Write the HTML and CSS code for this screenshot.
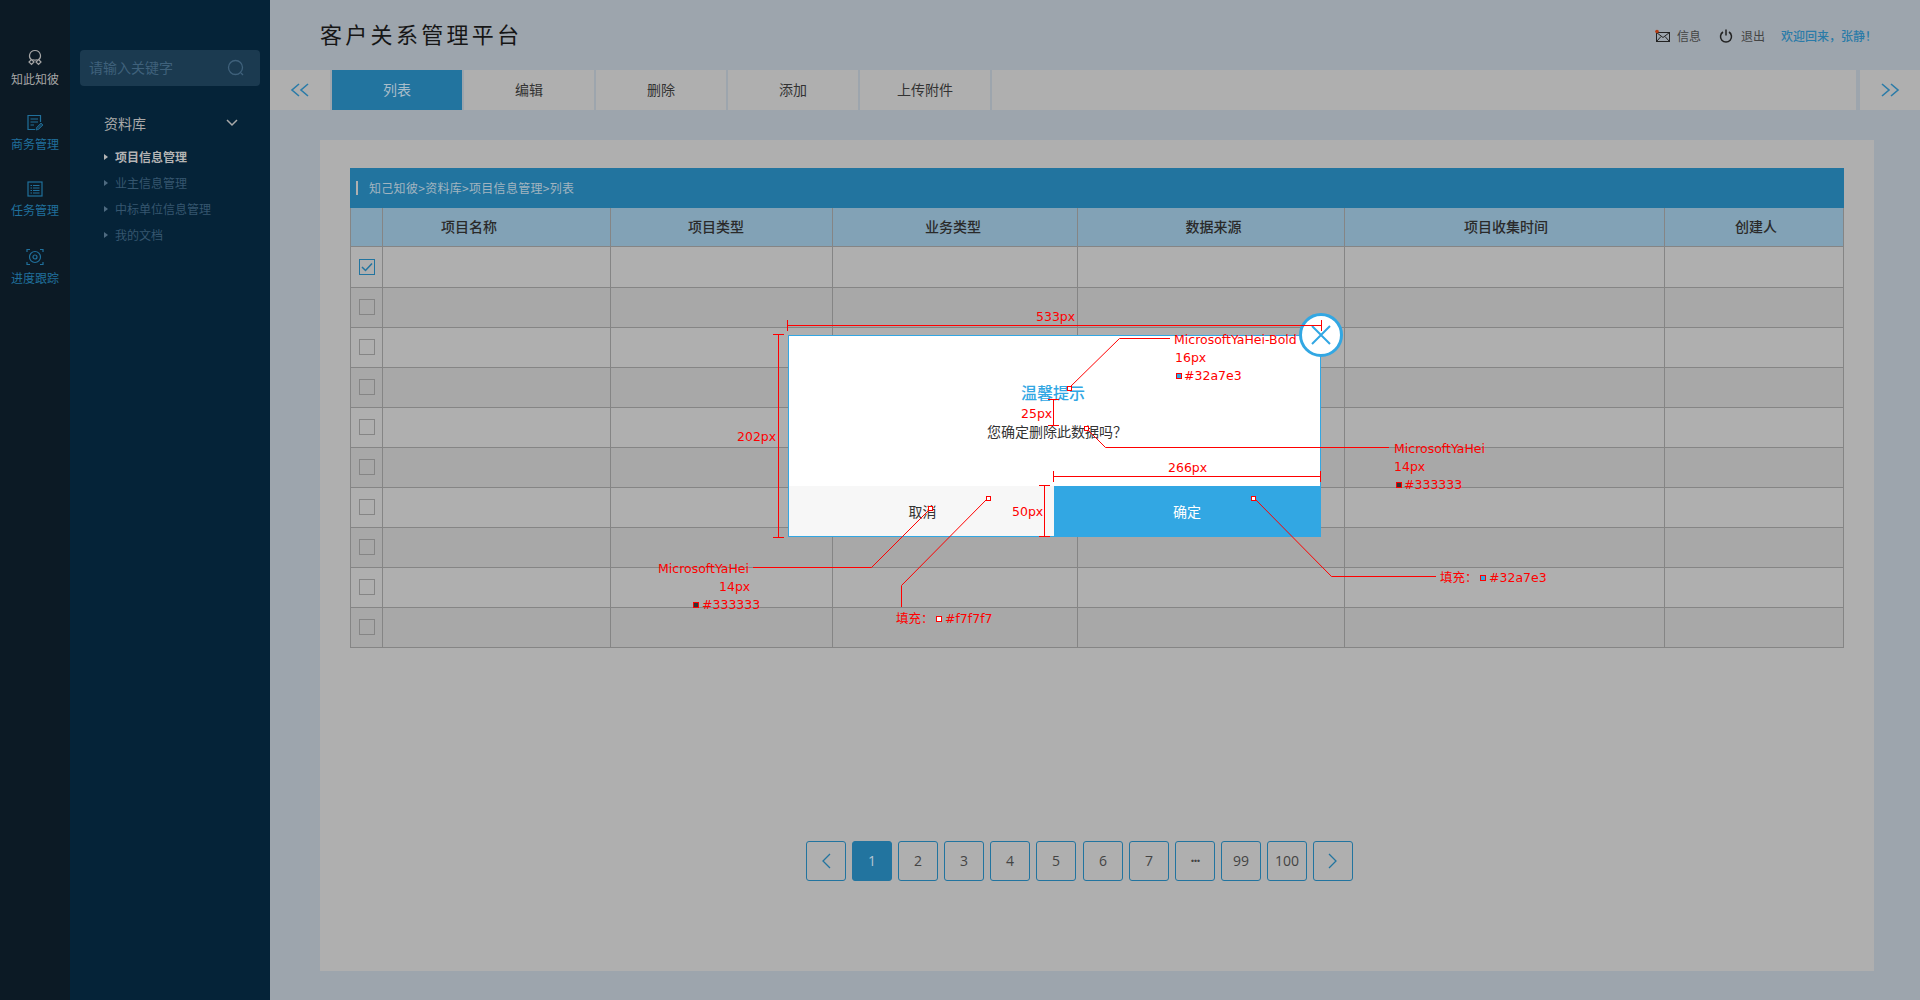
FILE: index.html
```html
<!DOCTYPE html>
<html lang="zh">
<head>
  <meta charset="UTF-8">
  <title>客户关系管理平台</title>
  <link rel="stylesheet" href="styles.css">
</head>
<body>
<nav class="rail">
  <a class="rail-item on">
    <svg width="18" height="18" viewBox="0 0 18 18" fill="none" stroke="currentColor" stroke-width="1.2"><path d="M5.2 10.5C3.6 9.3 3.2 7.8 3.6 5.8 4.2 3.2 6.2 1.5 9 1.5s4.800 1.700 5.400 4.300c.4 2 0 3.500-1.600 4.700"/><path d="M5.500 10.500l2.500 2.500-2.500 2.500L3 13zM12.500 10.500l2.500 2.500-2.500 2.500L10 13z"/><path d="M6.500 10.500c1.500.8 3.500.8 5 0"/></svg>
    <span>知此知彼</span>
  </a>
  <a class="rail-item">
    <svg width="18" height="18" viewBox="0 0 18 18" fill="none" stroke="currentColor" stroke-width="1.200"><path d="M14.500 8V1.500h-12.500v14h7"/><path d="M4.500 5h7.500M4.500 8h7.500M4.500 11h3.500"/><path class="pencil" d="M10 16l.7-2.700 4.300-4.300 2 2-4.300 4.300z"/></svg>
    <span>商务管理</span>
  </a>
  <a class="rail-item">
    <svg width="18" height="18" viewBox="0 0 18 18" fill="none" stroke="currentColor" stroke-width="1.200"><rect x="2" y="2" width="14" height="14"/><path d="M4.500 5.500h1.500M7 5.500h6.500M4.500 8h1.500M7 8h6.500M4.500 10.500h1.500M7 10.500h6.500M4.500 13h1.500M7 13h6.500"/></svg>
    <span>任务管理</span>
  </a>
  <a class="rail-item">
    <svg width="18" height="18" viewBox="0 0 18 18" fill="none" stroke="currentColor" stroke-width="1.200"><path d="M1 4V1.500h3M14 1.500h3V4M17 14v2.500h-3M4 16.500H1V14"/><circle cx="9" cy="9" r="5.500"/><circle cx="9" cy="9" r="2"/></svg>
    <span>进度跟踪</span>
  </a>
</nav>

<aside class="side">
  <div class="search">
    <span>请输入关键字</span>
    <svg width="18" height="18" viewBox="0 0 18 18" fill="none" stroke="currentColor" stroke-width="1.300"><circle cx="8.500" cy="8.500" r="7"/><path d="M14 14l2 2"/></svg>
  </div>
  <div class="side-head">
    <span>资料库</span>
    <svg width="12" height="8" viewBox="0 0 12 8" fill="none" stroke="currentColor" stroke-width="1.500"><path d="M1 1l5 5 5-5"/></svg>
  </div>
  <ul class="side-list">
    <li class="on">项目信息管理</li>
    <li>业主信息管理</li>
    <li>中标单位信息管理</li>
    <li>我的文档</li>
  </ul>
</aside>

<main class="main">
  <header class="top">
    <div class="logo">客户关系管理平台</div>
    <div class="top-links">
      <a class="top-link">
        <svg width="16" height="14" viewBox="0 0 16 14" fill="none" stroke="#222" stroke-width="1"><rect x="1.500" y="3.500" width="13" height="9"/><path d="M1.500 3.500l6.500 5 6.500-5M1.500 12.500l4.500-5M14.500 12.500l-4.500-5"/><circle cx="2" cy="2.500" r="1.800" fill="#b33a12" stroke="none"/></svg>
        信息
      </a>
      <a class="top-link power">
        <svg width="14" height="14" viewBox="0 0 14 14" fill="none" stroke="#222" stroke-width="1.500"><path d="M4 3a5.500 5.500 0 1 0 6 0"/><path d="M7 .5v6"/></svg>
        退出
      </a>
      <span class="welcome">欢迎回来，张静！</span>
    </div>
  </header>

  <div class="tabs">
    <button class="tab-arrow">
      <svg width="20" height="14" viewBox="0 0 20 14" fill="none" stroke="currentColor" stroke-width="1.600"><path d="M9 1L2 7l7 6M18 1l-7 6 7 6"/></svg>
    </button>
    <a class="tab active">列表</a>
    <a class="tab">编辑</a>
    <a class="tab">删除</a>
    <a class="tab">添加</a>
    <a class="tab">上传附件</a>
    <div class="tab-fill"></div>
    <button class="tab-arrow right">
      <svg width="20" height="14" viewBox="0 0 20 14" fill="none" stroke="currentColor" stroke-width="1.600"><path d="M2 1l7 6-7 6M11 1l7 6-7 6"/></svg>
    </button>
  </div>

  <section class="panel">
    <div class="crumb"><i></i>知己知彼&gt;资料库&gt;项目信息管理&gt;列表</div>
    <table class="grid">
      <colgroup>
        <col class="c0"><col class="c1"><col class="c2"><col class="c3"><col class="c4"><col class="c5"><col class="c6">
      </colgroup>
      <thead>
      <tr>
        <th></th>
        <th class="name">项目名称</th>
        <th class="type">项目类型</th>
        <th class="biz">业务类型</th>
        <th class="src">数据来源</th>
        <th class="time">项目收集时间</th>
        <th class="owner">创建人</th>
      </tr>
      </thead>
      <tbody>
      <tr><td><span class="check on"><svg width="12" height="10" viewBox="0 0 12 10" fill="none" stroke="currentColor" stroke-width="1.500"><path d="M1 5l3.500 3.500L11 1.500"/></svg></span></td><td></td><td></td><td></td><td></td><td></td><td></td></tr>
      <tr><td><span class="check"></span></td><td></td><td></td><td></td><td></td><td></td><td></td></tr>
      <tr><td><span class="check"></span></td><td></td><td></td><td></td><td></td><td></td><td></td></tr>
      <tr><td><span class="check"></span></td><td></td><td></td><td></td><td></td><td></td><td></td></tr>
      <tr><td><span class="check"></span></td><td></td><td></td><td></td><td></td><td></td><td></td></tr>
      <tr><td><span class="check"></span></td><td></td><td></td><td></td><td></td><td></td><td></td></tr>
      <tr><td><span class="check"></span></td><td></td><td></td><td></td><td></td><td></td><td></td></tr>
      <tr><td><span class="check"></span></td><td></td><td></td><td></td><td></td><td></td><td></td></tr>
      <tr><td><span class="check"></span></td><td></td><td></td><td></td><td></td><td></td><td></td></tr>
      <tr><td><span class="check"></span></td><td></td><td></td><td></td><td></td><td></td><td></td></tr>
      </tbody>
    </table>
    <div class="pager">
      <a><svg width="10" height="16" viewBox="0 0 10 16" fill="none" stroke="currentColor" stroke-width="1.300"><path d="M9 1L2 8l7 7"/></svg></a>
      <a class="active">1</a>
      <a>2</a>
      <a>3</a>
      <a>4</a>
      <a>5</a>
      <a>6</a>
      <a>7</a>
      <a class="dots">···</a>
      <a>99</a>
      <a>100</a>
      <a><svg width="10" height="16" viewBox="0 0 10 16" fill="none" stroke="currentColor" stroke-width="1.300"><path d="M1 1l7 7-7 7"/></svg></a>
    </div>
  </section>
</main>

<div class="dialog">
  <div class="dialog-body">
    <h2>温馨提示</h2>
    <p>您确定删除此数据吗？</p>
  </div>
  <div class="dialog-foot">
    <button class="cancel">取消</button>
    <button class="ok">确定</button>
  </div>
  <div class="dialog-close">
    <svg width="20" height="20" viewBox="0 0 20 20" fill="none" stroke="currentColor" stroke-width="2"><path d="M1 1l18 18M19 1L1 19"/></svg>
  </div>
</div>

<!-- redline notes from the design file -->
<svg class="notes" width="1920" height="1000" viewBox="0 0 1920 1000">
  <g fill="none" stroke="#f00">
    <path d="M787.500 320v11M787.500 325.500h534.500M1321.500 320v11"/>
    <path d="M773 334.500h11M778.500 334.500v203M773 537.500h11"/>
    <path d="M1048 399.500h11M1053.500 399.500v26.500M1048 425.500h11"/>
    <path d="M1039 485.500h11M1044.500 485.500v51M1039 536.500h11"/>
    <path d="M1053.500 471v11M1053.500 476.500h267.500M1320.500 471v11"/>
    <path d="M1069 388L1119.500 338.500H1170"/>
    <path d="M1086 428L1105.500 447.500H1389"/>
    <path d="M930 509L871.500 567.500H753"/>
    <path d="M988 498L901.500 585.500V607"/>
    <path d="M1254 498L1331.500 576.500H1436"/>
  </g>
  <g fill="#fff" stroke="#f00">
    <rect x="1067.500" y="386.500" width="4" height="4"/>
    <rect x="1084.500" y="426.500" width="4" height="4"/>
    <rect x="928.500" y="506.500" width="4" height="4"/>
    <rect x="986.500" y="496.500" width="4" height="4"/>
    <rect x="1251.500" y="496.500" width="4" height="4"/>
    <rect x="936.500" y="616.500" width="5" height="5"/>
    <rect x="1176.500" y="373.500" width="5" height="5" fill="#32a7e3"/>
    <rect x="1396.500" y="482.500" width="5" height="5" fill="#333"/>
    <rect x="693.500" y="602.500" width="5" height="5" fill="#333"/>
    <rect x="1480.500" y="575.500" width="5" height="5" fill="#32a7e3"/>
  </g>
  <g class="note-text">
    <text x="1036" y="321">533px</text>
    <text x="737" y="441">202px</text>
    <text x="1021" y="418">25px</text>
    <text x="1012" y="516">50px</text>
    <text x="1168" y="472">266px</text>
    <text x="1174" y="344">MicrosoftYaHei-Bold</text>
    <text x="1175" y="362">16px</text>
    <text x="1184" y="380">#32a7e3</text>
    <text x="1394" y="453">MicrosoftYaHei</text>
    <text x="1394" y="471">14px</text>
    <text x="1404" y="489">#333333</text>
    <text x="658" y="573">MicrosoftYaHei</text>
    <text x="719" y="591">14px</text>
    <text x="702" y="609">#333333</text>
    <text x="896" y="623">填充：</text>
    <text x="945" y="623">#f7f7f7</text>
    <text x="1440" y="582">填充：</text>
    <text x="1489" y="582">#32a7e3</text>
  </g>
</svg>
</body>
</html>
```

FILE: styles.css
```css
* {
  box-sizing: border-box;
}
body {
  margin: 0;
  height: 100vh;
  display: flex;
  overflow: hidden;
  background-color: #9da5ad;
  font-family: "Noto Sans CJK SC", sans-serif;
  font-size: 12px;
  color: #333;
}
button {
  font-family: inherit;
  border: 0;
  padding: 0;
}

/* Left rail */
.rail {
  width: 70px;
  flex: none;
  padding-top: 49px;
  background-color: #0c1a25;
  color: #20709c;
}
.rail-item {
  height: 66px;
  display: flex;
  flex-direction: column;
  align-items: center;
  gap: 3px;
}
.rail-item:first-child {
  height: 65px;
}
.rail-item:nth-child(3) {
  height: 68px;
}
.rail-item.on {
  color: #a6a6a6;
}
.rail-item span {
  line-height: 18px;
}
.pencil {
  fill: currentColor;
  fill-opacity: .5;
  stroke-width: .8;
}

/* Side menu */
.side {
  width: 200px;
  flex: none;
  padding: 50px 10px 0;
  background-color: #052338;
}
.search {
  height: 36px;
  padding: 0 15px 2px 9px;
  display: flex;
  align-items: center;
  justify-content: space-between;
  border-radius: 4px;
  background-color: #1b3a50;
  color: #3f617b;
  font-size: 14px;
}
.search svg {
  margin-top: 2px;
}
.side-head {
  margin-top: 25px;
  padding: 0 22px 0 24px;
  height: 24px;
  display: flex;
  align-items: center;
  justify-content: space-between;
  color: #a9a9a9;
  font-size: 14px;
}
.side-list {
  list-style: none;
  margin: 9px 0 0;
  padding: 0 0 0 24px;
  color: #35566f;
}
.side-list li {
  height: 26px;
  line-height: 26px;
  padding-left: 11px;
  position: relative;
}
.side-list li::before {
  content: "";
  position: absolute;
  left: 0;
  top: 10px;
  border-left: 4px solid #4e6a80;
  border-top: 3px solid transparent;
  border-bottom: 3px solid transparent;
}
.side-list li.on {
  color: #b4b4b4;
  font-weight: 700;
}
.side-list li.on::before {
  border-left-color: #b4b4b4;
}

/* Header */
.main {
  flex: 1;
  min-width: 0;
  display: flex;
  flex-direction: column;
}
.top {
  height: 70px;
  flex: none;
  padding: 0 43px 0 50px;
  display: flex;
  align-items: center;
  justify-content: space-between;
}
.logo {
  font-size: 22px;
  letter-spacing: 3.3px;
  color: #161616;
  margin-bottom: 5px;
}
.top-links {
  display: flex;
  align-items: center;
  gap: 16px;
  padding-top: 1px;
}
.top-link {
  display: flex;
  align-items: center;
  gap: 6px;
  color: #444;
}
.top-link.power {
  gap: 8px;
  margin-left: 2px;
}
.welcome {
  color: #2a7ba8;
  font-weight: 500;
}

/* Tabs */
.tabs {
  height: 40px;
  flex: none;
  display: flex;
  gap: 2px;
}
.tab, .tab-arrow, .tab-fill {
  background-color: #afafaf;
}
.tab-arrow {
  width: 60px;
  flex: none;
  display: flex;
  align-items: center;
  justify-content: center;
  color: #2a7ba8;
}
.tab-arrow.right {
  margin-left: 2px;
}
.tab {
  width: 130px;
  flex: none;
  line-height: 38px;
  text-align: center;
  font-size: 14px;
}
.tab.active {
  background-color: #22749f;
  color: #a9bdca;
}
.tab-fill {
  flex: 1;
}

/* List panel */
.panel {
  flex: 1;
  margin: 30px 46px 29px 50px;
  padding: 28px 30px 0;
  background-color: #afafaf;
}
.crumb {
  height: 40px;
  display: flex;
  align-items: center;
  padding: 0 0 2px 6px;
  background-color: #22749f;
  color: #a2b4c0;
  letter-spacing: .3px;
}
.crumb i {
  width: 2px;
  height: 14px;
  margin: 2px 11px 0 0;
  background-color: #b0b0b0;
}
.grid {
  table-layout: fixed;
  border-collapse: collapse;
  width: 1493px;
}
.c0 { width: 32px; }
.c1 { width: 228px; }
.c2 { width: 222px; }
.c3 { width: 245px; }
.c4 { width: 267px; }
.c5 { width: 320px; }
.c6 { width: 179px; }
.grid th, .grid td {
  border: 1px solid #858585;
  padding: 0;
  text-align: center;
}
.grid thead tr {
  height: 38px;
}
.grid th {
  border-top: 0;
  padding-bottom: 1px;
  background-color: #82a2b6;
  font-size: 14px;
  font-weight: 500;
  color: #2a2a2a;
}
.grid th.name {
  padding-right: 55px;
}
.grid th.type {
  padding-right: 11px;
}
.grid th.biz {
  padding-right: 4px;
}
.grid th.src {
  padding-left: 5px;
}
.grid th.time {
  padding-left: 3px;
}
.grid th.owner {
  padding-left: 4px;
}
.grid tbody tr {
  height: 40px;
}
.grid tbody tr:first-child {
  height: 41px;
}
.grid tbody tr:nth-child(even) {
  background-color: #a8a8a8;
}
.check {
  display: block;
  width: 16px;
  height: 16px;
  margin: 0 auto;
  border: 1px solid #858585;
  color: #22749f;
}
.check.on {
  border-color: #22749f;
  padding: 2px 1px;
}
.check svg {
  display: block;
}

/* Pagination */
.pager {
  margin-top: 193px;
  padding-left: 456px;
  display: flex;
  gap: 6px;
}
.pager a {
  width: 40px;
  height: 40px;
  display: flex;
  align-items: center;
  justify-content: center;
  border: 1px solid #22749f;
  border-radius: 3px;
  color: #444;
  font-family: "Open Sans", sans-serif;
  font-size: 14px;
}
.pager a:nth-child(7) {
  margin-left: 1px;
}
.pager a svg {
  color: #22749f;
}
.pager a.active {
  background-color: #22749f;
  color: #b5c6d2;
}
.pager a.dots {
  font-weight: 700;
  letter-spacing: -1px;
}

/* Delete dialog, sits over the dimmed page */
.dialog {
  position: absolute;
  left: 788px;
  top: 335px;
  width: 533px;
  height: 202px;
  display: flex;
  flex-direction: column;
  border: 1px solid #32a7e3;
  background-color: #fff;
}
.dialog-body {
  flex: 1;
  display: flex;
  flex-direction: column;
  align-items: center;
  justify-content: center;
  gap: 18px;
}
.dialog-body h2 {
  margin: 0 3px 0 0;
  font-size: 16px;
  line-height: 22px;
  font-weight: 500;
  color: #32a7e3;
}
.dialog-body p {
  margin: 0 0 0 5px;
  font-size: 14px;
  line-height: 20px;
  color: #333;
}
.dialog-foot {
  height: 50px;
  flex: none;
  display: flex;
}
.dialog-foot button {
  font-size: 14px;
}
.cancel {
  flex: 1;
  padding-left: 2px;
  background-color: #f7f7f7;
  color: #333;
}
.ok {
  width: 266px;
  background-color: #32a7e3;
  color: #fff;
}
.dialog-close {
  position: absolute;
  right: -23px;
  top: -23px;
  width: 44px;
  height: 44px;
  display: flex;
  align-items: center;
  justify-content: center;
  border: 3px solid #32a7e3;
  border-radius: 50%;
  background-color: #fff;
  color: #32a7e3;
}

/* Redlines */
.notes {
  position: absolute;
  left: 0;
  top: 0;
}
.note-text {
  fill: #f00;
  font-family: "DejaVu Sans", "Noto Sans CJK SC", sans-serif;
  font-size: 12.500px;
}
```
